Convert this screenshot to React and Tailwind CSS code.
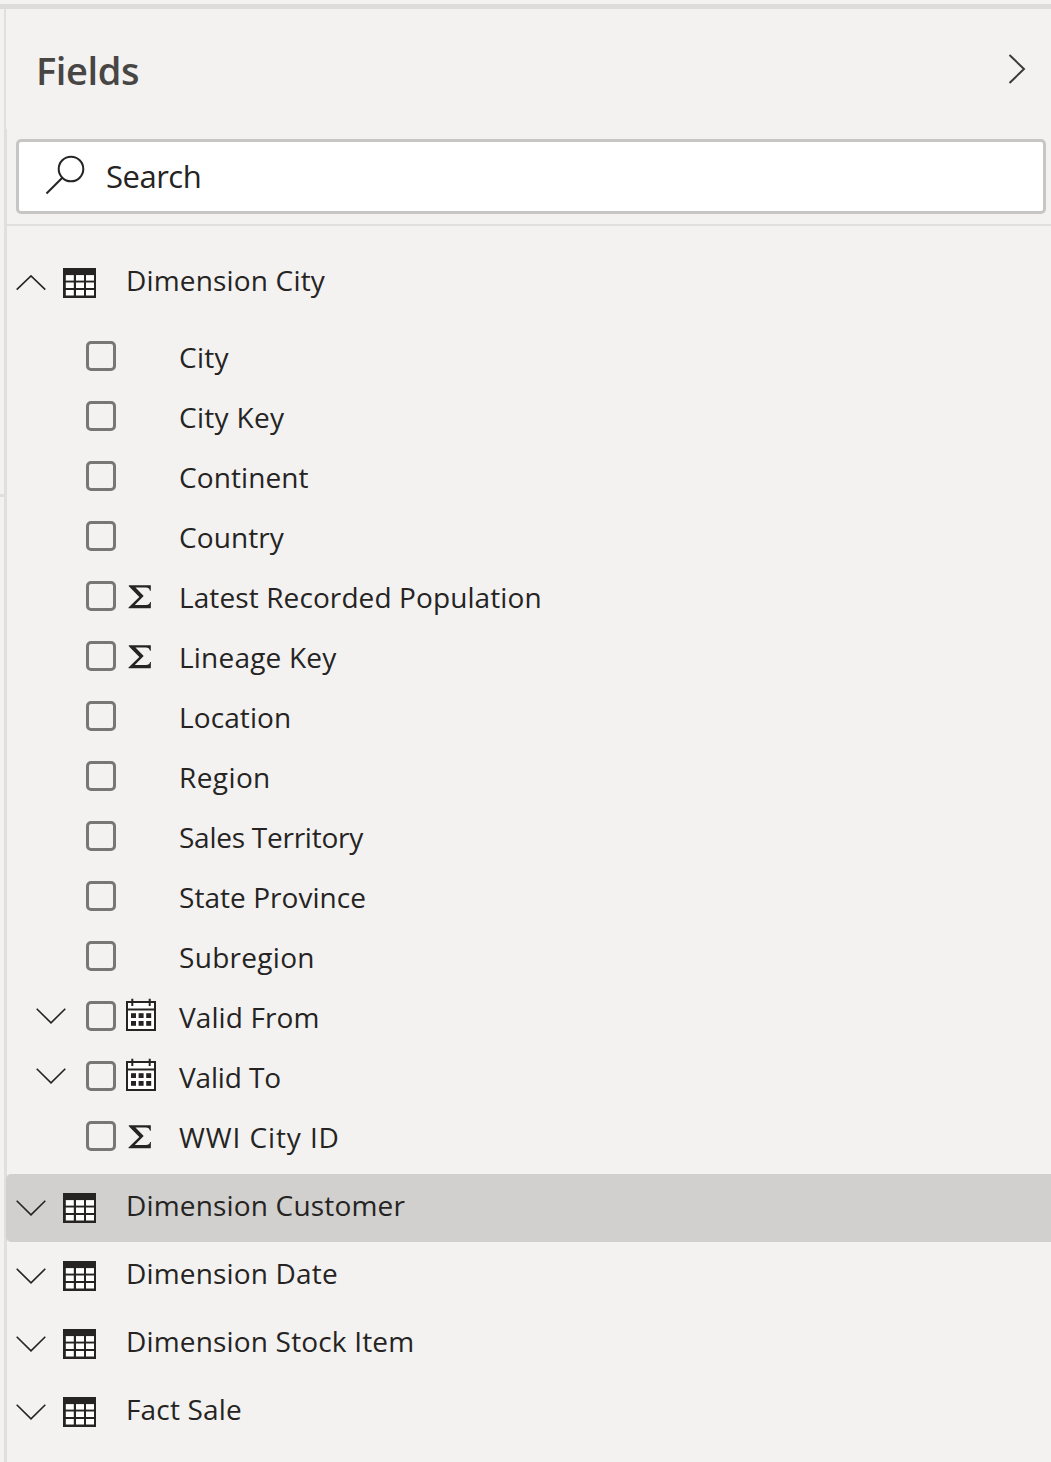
import React from "react";

const fields = [
  { name: "City", tracking: "tracking-[0.3px]" },
  { name: "City Key", tracking: "tracking-[0.3px]" },
  { name: "Continent" },
  { name: "Country" },
  { name: "Latest Recorded Population", kind: "sum" },
  { name: "Lineage Key", kind: "sum", tracking: "tracking-[0.2px]" },
  { name: "Location" },
  { name: "Region", tracking: "tracking-[0.4px]" },
  { name: "Sales Territory", tracking: "tracking-[-0.25px]" },
  { name: "State Province", tracking: "tracking-[0.05px]" },
  { name: "Subregion", tracking: "tracking-[0.3px]" },
  { name: "Valid From", kind: "date", expandable: true },
  { name: "Valid To", kind: "date", expandable: true, tracking: "tracking-[-0.15px]" },
  { name: "WWI City ID", kind: "sum", tracking: "tracking-[0.9px]" },
];

const tables = [
  { name: "Dimension Customer", selected: true },
  { name: "Dimension Date" },
  { name: "Dimension Stock Item" },
  { name: "Fact Sale" },
];

function Chevron({ up }) {
  return (
    <svg width="30" height="16" viewBox="0 0 30 16" fill="none" stroke="#252423" strokeWidth="1.6" className="shrink-0">
      <path d={up ? "M0.7 14.700 15 0.900l14.300 13.800" : "M0.7 0.800 15 14.800l14.300-14"} />
    </svg>
  );
}

function TableIcon() {
  return (
    <svg width="33" height="30" viewBox="0 0 33 30" className="shrink-0">
      <path fill="#252423" d="M0 0h33v30H0z" />
      {[7.1, 14.5, 22].map((y) =>
        [2.8, 13, 23].map((x) => (
          <rect key={x + "-" + y} x={x} y={y} width="8" height="5.500" fill="#fff" />
        ))
      )}
    </svg>
  );
}

function CalendarIcon() {
  return (
    <svg width="30" height="33" viewBox="0 0 30 33" className="shrink-0">
      <path fill="#fff" stroke="#252423" strokeWidth="2" d="M1 4h28v28H1z" />
      <path stroke="#252423" strokeWidth="2" d="M1 11.500h28M6.300.700V8M23.700.700V8" />
      {[15.2, 23].map((y) =>
        [5, 12.6, 20.2].map((x) => <rect key={x + "-" + y} x={x} y={y} width="5" height="4.800" fill="#252423" />)
      )}
    </svg>
  );
}

function SumIcon() {
  return (
    <svg width="23" height="24" viewBox="0 0 23 24" className="shrink-0">
      <path
        fill="#252423"
        d="M.8.300H22.800V5.800h-.9C21.500 3.400 20.300 2.500 17.800 2.500H7.500l8.200 8.400-8.900 9H18c2.600 0 3.500-.8 4.100-3h.8L22.800 23.300H.500v-.8L11.300 12.100.8 1.300z"
      />
    </svg>
  );
}

function FieldRow({ name, kind, expandable, tracking = "tracking-[0.1px]" }) {
  return (
    <li className="flex h-[60px] items-center pl-[29px]">
      <span className="flex w-[50px] shrink-0">{expandable && <Chevron />}</span>
      <span className="size-[30px] shrink-0 rounded-[5px] border-3 border-[#797775]" />
      <span className="flex w-[63px] shrink-0 items-center">
        {kind === "sum" && <span className="ml-[12px] mt-[2px]"><SumIcon /></span>}
        {kind === "date" && <span className="ml-[10px] -mt-[4px]"><CalendarIcon /></span>}
      </span>
      <span className={`mt-[2px] whitespace-nowrap ${tracking}`}>{name}</span>
    </li>
  );
}

function TableRow({ name, open, selected }) {
  return (
    <div className={`flex h-[68px] items-center pl-[9px] ${selected ? "-ml-px rounded-l-[5px] bg-[#d1d0ce] pl-[10px]" : ""}`}>
      <Chevron up={open} />
      <span className="ml-[17px]"><TableIcon /></span>
      <span className="-mt-[6px] ml-[30px] whitespace-nowrap tracking-[0.17px]">{name}</span>
    </div>
  );
}

export default function App() {
  return (
    <div className="flex h-[1462px] w-[1051px] flex-col overflow-hidden bg-[#f3f2f1] pt-1 font-['Open_Sans',sans-serif] text-[28px] text-[#252423]">
      <div className="h-[5px] shrink-0 bg-[#dddcdb]" />
      <div className="flex flex-1">
        <div className="flex w-1 flex-col pt-[485px]">
          <div className="h-[3px] bg-[#e1dfdd]" />
        </div>
        <div className="flex w-[3px] flex-col">
          <div className="h-[120px] w-[2px] bg-[#e1dfdd]" />
          <div className="flex-1 bg-[#e1dfdd]" />
        </div>
        <main className="flex-1">
          <header className="flex h-[130px] items-start justify-between pl-[29px] pr-[25px]">
            <h1 className="mt-[33px] text-[38px] font-semibold leading-[56px] tracking-[-0.4px] text-[#484644]">Fields</h1>
            <svg width="18" height="30" viewBox="0 0 18 30" fill="none" stroke="#3b3a39" strokeWidth="2" className="mt-[45px]">
              <path d="M1.500 1 16 15 1.500 29" />
            </svg>
          </header>
          <div className="ml-[9px] flex h-[75px] w-[1030px] items-center rounded-[5px] border-3 border-[#c8c6c4] bg-white pl-[26px]">
            <svg width="40" height="40" viewBox="0 0 40 40" fill="none" stroke="#252423" strokeWidth="2" className="-mt-[3px]">
              <circle cx="26" cy="14" r="12.300" />
              <path d="M17.300 22.700 1.500 38.500" />
            </svg>
            <span className="-mt-[1px] ml-[21px] text-[31px] tracking-[-0.5px]">Search</span>
          </div>
          <div className="mt-[10px] h-[2px] bg-[#e1dfdd]" />
          <section className="pt-[23px]">
            <TableRow name="Dimension City" open />
            <ul className="pb-2 pt-[9px]">
              {fields.map((f) => <FieldRow key={f.name} {...f} />)}
            </ul>
            {tables.map((t) => <TableRow key={t.name} {...t} />)}
          </section>
        </main>
      </div>
    </div>
  );
}
